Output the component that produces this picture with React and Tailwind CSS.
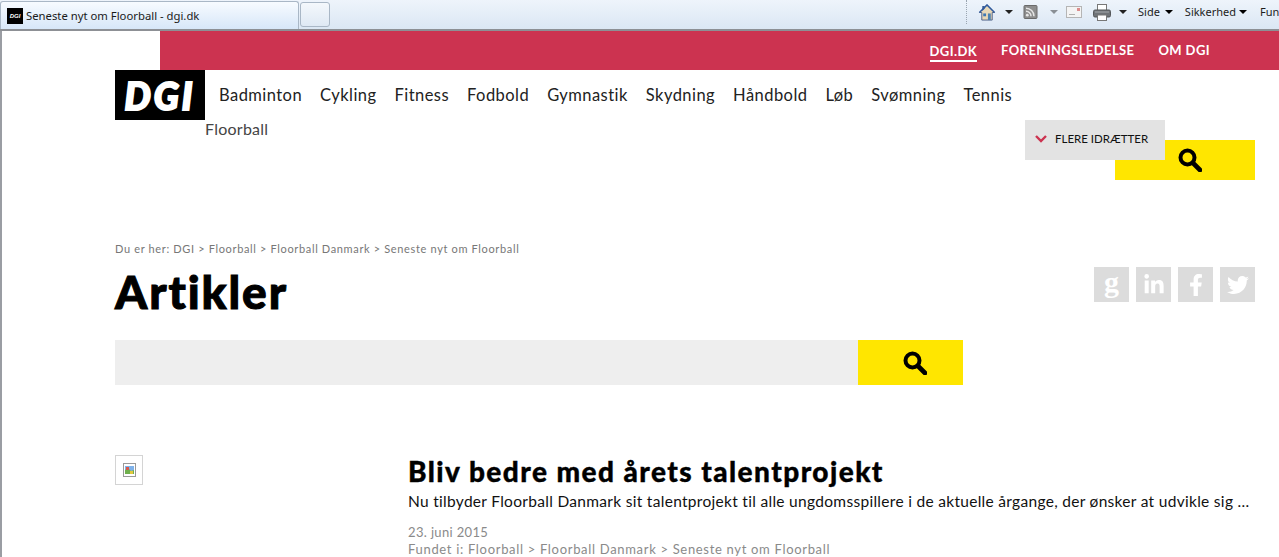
import React from 'react';
import { FaLinkedinIn, FaFacebookF, FaTwitter } from 'react-icons/fa';

const sports = ['Badminton', 'Cykling', 'Fitness', 'Fodbold', 'Gymnastik', 'Skydning', 'Håndbold', 'Løb', 'Svømning', 'Tennis'];

const Caret = ({ className = 'fill-[#222]' }) => (
    <svg width="8" height="4" viewBox="0 0 8 4" className={className}><path d="M0 0h8L4 4z" /></svg>
);

const SearchIcon = () => (
    <svg width="24" height="24" viewBox="0 0 24 24" fill="none" stroke="#000" className="ml-[9px]">
        <circle cx="9.5" cy="9.5" r="7" strokeWidth="4" />
        <path d="M15 15l7 7" strokeWidth="4.6" strokeLinecap="round" />
    </svg>
);

const Toolbar = () => (
    <div className="flex items-center w-max h-[24px] font-['Noto_Sans',sans-serif] text-[11px] text-[#1c1c1c] whitespace-nowrap">
        <div className="h-[24px] border-l border-dotted border-[#9aa5b1] mr-[11px]" />
        {/* home */}
        <svg width="18" height="17" viewBox="0 0 18 18">
            <path d="M9 1L1 9h2.5v8h11V9H17z" fill="#e8d9b8" stroke="#4b5f86" strokeWidth="1" />
            <path d="M4 2h2.5v3L4 7.5z" fill="#3b5d96" />
            <path d="M1 9l8-8 8 8" fill="none" stroke="#2f5a9e" strokeWidth="1.6" />
            <rect x="5" y="10" width="3" height="3" fill="#3f79b5" />
            <rect x="10" y="10" width="3" height="7" fill="#4f82b0" />
        </svg>
        <Caret className="ml-[9px] fill-[#222]" />
        {/* rss */}
        <svg width="15" height="14" viewBox="0 0 14 14" className="ml-[10px]">
            <rect x="0.5" y="0.5" width="13" height="13" rx="1" fill="#8d8d8d" stroke="#6a6a6a" />
            <circle cx="3.8" cy="10.2" r="1.4" fill="#e6e6e6" />
            <path d="M2.5 6.3a5 5 0 015 5M2.5 3.2a8 8 0 018 8" fill="none" stroke="#e6e6e6" strokeWidth="1.5" />
        </svg>
        <Caret className="ml-[12px] fill-[#8a8f95]" />
        {/* mail */}
        <svg width="16" height="12" viewBox="0 0 16 12" className="ml-[8px]">
            <rect x="0.5" y="0.5" width="15" height="11" fill="#f4f4f4" stroke="#b5b5b5" />
            <path d="M3 8.5h6" stroke="#b0b0b0" />
            <rect x="11" y="2" width="3" height="3" fill="#dc8d8d" />
        </svg>
        {/* printer */}
        <svg width="18" height="17" viewBox="0 0 18 17" className="ml-[11px]">
            <rect x="4.5" y="0.5" width="9" height="6" fill="#fff" stroke="#777" />
            <rect x="0.5" y="6" width="17" height="7" rx="1.5" fill="#6f7377" stroke="#55585b" />
            <rect x="4.5" y="11" width="9" height="5.5" fill="#fff" stroke="#777" />
            <path d="M2 8h14" stroke="#a5a9ad" />
        </svg>
        <Caret className="ml-[8px] fill-[#222]" />
        <span className="ml-[11px]">Side</span>
        <Caret className="ml-[5px]" />
        <span className="ml-[12px]">Sikkerhed</span>
        <Caret className="ml-[3px]" />
        <span className="ml-[13px]">Fun</span>
    </div>
);

const BrowserBar = () => (
    <div className="flex h-[31px] overflow-hidden border-b-2 border-[#8d9095] bg-gradient-to-b from-[#eef4fb] to-[#dbe7f4]">
        <div className="flex items-center h-[29px] w-[299px] shrink-0 mt-[1px] pl-[6px] gap-[4px] rounded-t-[3px] border border-b-0 border-[#a9b7c6] bg-gradient-to-b from-[#f7fbff] to-[#d6e6f8]">
            <div className="flex items-center justify-center w-[16px] h-[16px] bg-black text-white text-[6px] italic font-black font-['Liberation_Sans',sans-serif]">DGI</div>
            <span className="ml-[-1px] font-['Noto_Sans',sans-serif] text-[11.3px] text-[#1a1a1a] whitespace-nowrap">Seneste nyt om Floorball - dgi.dk</span>
        </div>
        <div className="w-[30px] h-[25px] ml-[1px] mt-[2px] shrink-0 rounded-[3px] border border-[#a9b7c6] bg-gradient-to-b from-[#f4f8fc] to-[#dfe9f4]" />
        <div className="flex-1" />
        <div className="w-[313px] shrink-0 overflow-hidden">
            <Toolbar />
        </div>
    </div>
);

const Article = () => (
    <div className="flex mt-[71px]">
        <div className="w-[293px] shrink-0">
            <div className="flex items-center justify-center w-[28px] h-[30px] mt-[-1px] border border-[#d4d4d4]">
                <svg width="13" height="14" viewBox="0 0 13 14">
                    <rect x="0.5" y="0.5" width="12" height="13" fill="#fff" stroke="#9a9a9a" />
                    <rect x="2" y="3" width="9" height="8" fill="#7fb2ea" />
                    <path d="M2 11V7l3-2 3 3 3-1v4z" fill="#6fb04d" />
                    <rect x="3" y="4" width="3" height="3" fill="#d9584a" />
                    <rect x="7" y="8" width="3" height="3" fill="#e3c93d" />
                </svg>
            </div>
        </div>
        <div className="min-w-0">
            <h2 className="mt-[-2px] text-[28px] leading-[34px] font-black text-black tracking-[1.45px] whitespace-nowrap [-webkit-text-stroke:0.4px_black]">Bliv bedre med årets talentprojekt</h2>
            <p className="mt-[2px] text-[15.5px] leading-[22px] text-[#111] whitespace-nowrap tracking-[0.3px]">Nu tilbyder Floorball Danmark sit talentprojekt til alle ungdomsspillere i de aktuelle årgange, der ønsker at udvikle sig ...</p>
            <p className="mt-[12px] text-[13px] leading-[16px] text-[#8a8a8a] tracking-[0.35px]">23. juni 2015</p>
            <p className="mt-[1px] text-[13px] leading-[17px] text-[#8a8a8a] tracking-[0.68px] whitespace-nowrap">Fundet i: Floorball &gt; Floorball Danmark &gt; Seneste nyt om Floorball</p>
        </div>
    </div>
);

const App = () => {
    return (
        <div className="h-[557px] w-[1279px] overflow-hidden bg-white font-['Lato',sans-serif]">
            <BrowserBar />
            <div className="border-l-2 border-[#9a9da3] h-[526px]">
                {/* red top bar */}
                <div className="flex items-center justify-end h-[39px] ml-[158px] pr-[69px] gap-[24px] bg-[#cc3350] text-white text-[13px] font-bold tracking-[0.4px]">
                    <a className="mt-[3px] pb-[1px] border-b-2 border-white leading-[16px]">DGI.DK</a>
                    <a>FORENINGSLEDELSE</a>
                    <a>OM DGI</a>
                </div>

                <div className="pl-[113px] pr-[24px]">
                    {/* logo + sports nav */}
                    <div className="flex h-[50px]">
                        <div className="flex items-center justify-center w-[90px] h-[50px] bg-black text-white text-[37px] leading-none italic font-black tracking-[3px] [-webkit-text-stroke:2px_white]">DGI</div>
                        <nav className="flex ml-[14px] gap-[18px] pt-[14px] text-[16.5px] leading-[22px] text-[#222] tracking-[0.45px]">
                            {sports.map((s) => <a key={s}>{s}</a>)}
                        </nav>
                    </div>
                    <div className="relative flex justify-between h-[60px]">
                        <a className="ml-[90px] mt-[-2px] text-[16px] leading-[22px] text-[#444] tracking-[0.25px]">Floorball</a>
                        <div className="flex items-center justify-center mt-[20px] w-[140px] h-[40px] bg-[#ffe600]"><SearchIcon /></div>
                        <div className="absolute top-0 left-[910px] flex items-center w-[140px] h-[40px] pl-[10px] pb-[2px] gap-[8px] bg-[#e3e3e3] text-[11.5px] text-[#111]">
                            <svg width="12" height="8" viewBox="0 0 12 8" fill="none" stroke="#cc3350" strokeWidth="2.4"><path d="M1 1l5 5 5-5" /></svg>
                            FLERE IDRÆTTER
                        </div>
                    </div>

                    {/* breadcrumb and title */}
                    <p className="mt-[62px] text-[11px] leading-[14px] text-[#777] tracking-[0.65px]">Du er her: DGI &gt; Floorball &gt; Floorball Danmark &gt; Seneste nyt om Floorball</p>
                    <div className="flex justify-between">
                        <h1 className="mt-[9px] text-[46px] leading-[54px] font-black text-black tracking-[1.9px] [-webkit-text-stroke:1px_black]">Artikler</h1>
                        <div className="flex gap-[7px] mt-[11px] h-[35px]">
                            <div className="flex items-center justify-center w-[35px] h-[35px] bg-[#dcdcdc] text-white text-[30px] font-bold leading-none font-['Liberation_Serif',serif] pb-[6px]">g</div>
                            <div className="flex items-center justify-center w-[35px] h-[35px] bg-[#dcdcdc] text-white text-[22px]"><FaLinkedinIn /></div>
                            <div className="flex items-center justify-center w-[35px] h-[35px] bg-[#dcdcdc] text-white text-[22px]"><FaFacebookF /></div>
                            <div className="flex items-center justify-center w-[35px] h-[35px] bg-[#dcdcdc] text-white text-[22px]"><FaTwitter /></div>
                        </div>
                    </div>

                    {/* search */}
                    <div className="flex w-[848px] h-[45px] mt-[21px] bg-[#eeeeee]">
                        <div className="flex-1" />
                        <div className="flex items-center justify-center w-[105px] bg-[#ffe600]"><SearchIcon /></div>
                    </div>

                    <Article />
                </div>
            </div>
        </div>
    );
};

export default App;
